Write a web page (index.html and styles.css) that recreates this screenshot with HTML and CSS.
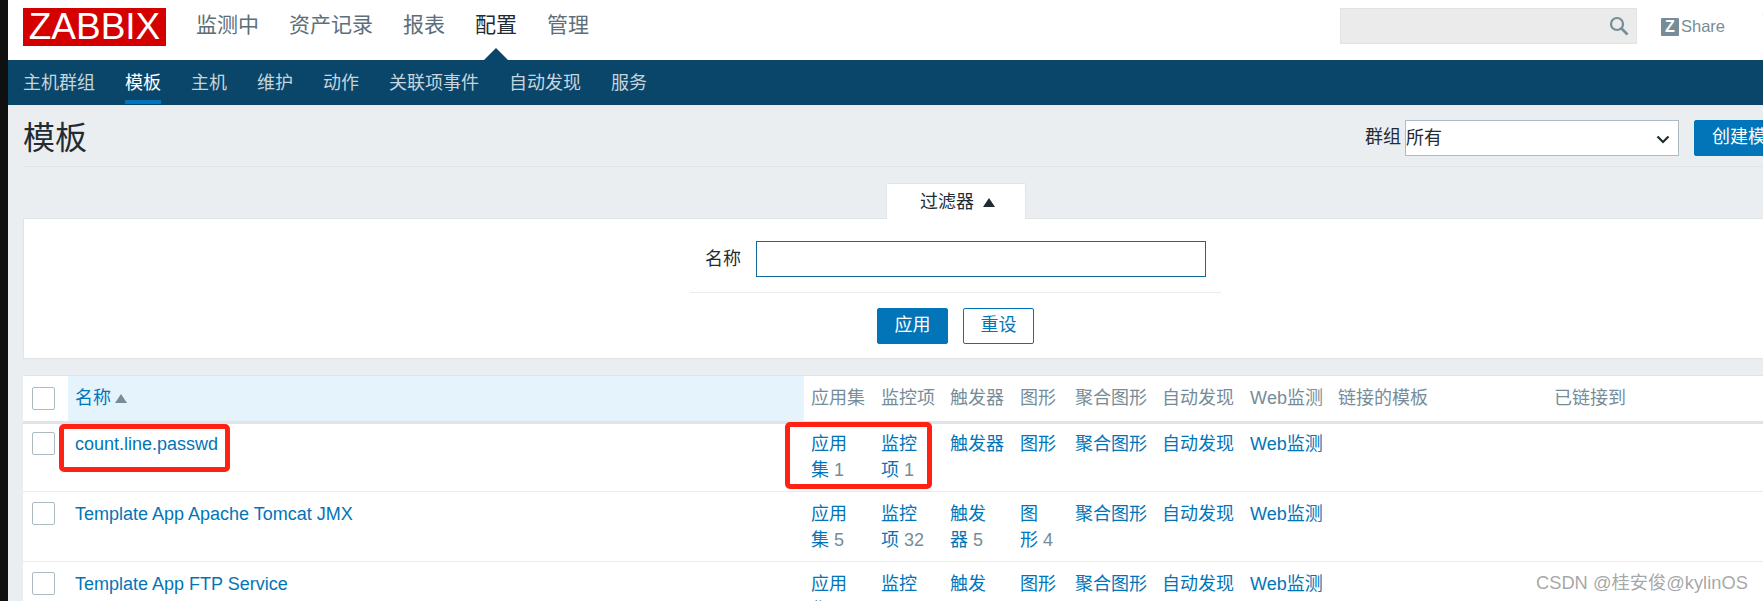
FILE: index.html
```html
<!DOCTYPE html>
<html lang="zh-CN">
<head>
<meta charset="utf-8">
<title>模板</title>
<link rel="stylesheet" href="styles.css">
</head>
<body>
<div class="strip"></div>
<div class="page">
  <header class="top">
    <a class="logo">ZABBIX</a>
    <nav class="mainnav">
      <a>监测中</a><a>资产记录</a><a>报表</a><a class="active">配置<i class="caret"></i></a><a>管理</a>
    </nav>
    <div class="search">
      <svg class="search-icon" width="20" height="20" viewBox="0 0 20 20"><circle cx="8" cy="8" r="6" fill="none" stroke="#768d99" stroke-width="2.2"/><path d="M12.5 12.5L18.5 18.5" stroke="#768d99" stroke-width="2.6"/></svg>
    </div>
    <a class="share"><b class="zicon">Z</b>Share</a>
    <a class="help">?</a>
  </header>
  <nav class="subnav">
    <a>主机群组</a><a class="active">模板</a><a>主机</a><a>维护</a><a>动作</a><a>关联项事件</a><a>自动发现</a><a>服务</a>
  </nav>
  <main class="content">
    <div class="titlebar">
      <h1>模板</h1>
      <div class="controls">
        <label>群组</label>
        <div class="select"><span>所有</span>
          <svg width="14" height="9" viewBox="0 0 14 9"><path d="M1.5 1.5L7 7L12.5 1.5" fill="none" stroke="#1f2c33" stroke-width="2.2"/></svg>
        </div>
        <button class="btn primary wide">创建模板</button>
        <button class="btn primary">导入</button>
      </div>
    </div>
    <div class="filter">
      <div class="tabrow"><div class="tab">过滤器<i class="up"></i></div></div>
      <div class="panel">
        <div class="formrow"><label>名称</label><div class="input"></div></div>
        <div class="actions"><button class="btn primary">应用</button><button class="btn ghost">重设</button></div>
      </div>
    </div>
    <table class="grid">
      <colgroup>
        <col class="c0"><col class="c1"><col class="c2"><col class="c3"><col class="c2"><col class="c4"><col class="c6"><col class="c5"><col class="c5"><col class="c7"><col class="c8">
      </colgroup>
      <thead>
        <tr>
          <th class="chk"><span class="box"></span></th>
          <th class="sorted">名称<i class="sort"></i></th>
          <th>应用集</th><th>监控项</th><th>触发器</th><th>图形</th><th>聚合图形</th><th>自动发现</th><th>Web监测</th><th>链接的模板</th><th>已链接到</th>
        </tr>
      </thead>
      <tbody>
        <tr>
          <td class="chk"><span class="box"></span></td>
          <td><a>count.line.passwd</a></td>
          <td><a>应用集</a>&nbsp;<s>1</s></td><td><a>监控项</a>&nbsp;<s>1</s></td><td><a>触发器</a></td><td><a>图形</a></td><td><a>聚合图形</a></td><td><a>自动发现</a></td><td><a>Web监测</a></td><td></td><td></td>
        </tr>
        <tr>
          <td class="chk"><span class="box"></span></td>
          <td><a>Template App Apache Tomcat JMX</a></td>
          <td><a>应用集</a>&nbsp;<s>5</s></td><td><a>监控项</a>&nbsp;<s>32</s></td><td><a>触发器</a>&nbsp;<s>5</s></td><td><a>图形</a>&nbsp;<s>4</s></td><td><a>聚合图形</a></td><td><a>自动发现</a></td><td><a>Web监测</a></td><td></td><td></td>
        </tr>
        <tr>
          <td class="chk"><span class="box"></span></td>
          <td><a>Template App FTP Service</a></td>
          <td><a>应用集</a>&nbsp;<s>1</s></td><td><a>监控项</a>&nbsp;<s>1</s></td><td><a>触发器</a>&nbsp;<s>1</s></td><td><a>图形</a></td><td><a>聚合图形</a></td><td><a>自动发现</a></td><td><a>Web监测</a></td><td></td><td></td>
        </tr>
      </tbody>
    </table>
  </main>
  <div class="mark mark-name"></div>
  <div class="mark mark-counts"></div>
</div>
<div class="watermark">CSDN @桂安俊@kylinOS</div>
</body>
</html>
```
FILE: styles.css
```css
* { box-sizing: border-box; }
html, body { margin: 0; height: 601px; overflow: hidden; }
body {
  display: flex;
  width: 1903px;
  position: relative;
  font: 18px/25.5px "Liberation Sans", "Noto Sans CJK SC", sans-serif;
  font-kerning: none;
  color: #1f2c33;
  background: #ebeef0;
}
a { color: inherit; text-decoration: none; }
.strip { width: 8px; flex: none; background: #101010; }
.page { flex: 1; min-width: 0; position: relative; }

.top { height: 60px; background: #fff; display: flex; align-items: flex-start; padding: 8px 0 0 15px; }
.logo {
  width: 143px; height: 38px; flex: none;
  background: #d40000; color: #fff; text-align: center;
  font-size: 37px; line-height: 38px;
}
.mainnav { display: flex; gap: 30px; margin-left: 30px; font-size: 21px; line-height: 34px; color: #5d6e78; }
.mainnav a { position: relative; display: block; }
.mainnav .active { color: #1f2c33; }
.caret {
  position: absolute; left: 9px; top: 40px;
  border-left: 12px solid transparent; border-right: 12px solid transparent;
  border-bottom: 12px solid #0a466a;
}
.search {
  width: 297px; height: 36px; margin-left: auto; flex: none;
  background: #ebebeb; border: 1px solid #e3e3e3;
  display: flex; align-items: center; justify-content: flex-end; padding-right: 7px;
}
.share { display: flex; align-items: center; gap: 2px; margin-left: 24px; height: 38px; font-size: 16.5px; color: #768d99; }
.zicon {
  width: 18px; height: 18px; background: #768d99; color: #fff; border-radius: 1px;
  font-size: 16px; line-height: 18px; text-align: center;
}
.help { margin: 0 130px 0 37px; font-size: 18px; line-height: 20px; color: #768d99; font-weight: bold; }

.subnav { height: 45px; background: #0a466a; display: flex; gap: 30px; padding-left: 15px; color: #c5d5de; line-height: 46px; }
.subnav a { height: 44px; }
.subnav .active { color: #fff; border-bottom: 4px solid #0275b8; }

.content { padding: 0 15px; }
.titlebar { height: 62px; display: flex; align-items: center; justify-content: space-between; border-bottom: 1px solid #dfe4e7; padding-top: 5px; }
h1 { margin: 0; font-size: 32px; line-height: 40px; font-weight: normal; color: #1f2c33; }
.controls { display: flex; align-items: center; }
.controls label { margin-right: 4px; }
.select {
  width: 274px; height: 36px; background: #fff; border: 1px solid #acbbc2;
  display: flex; align-items: center; justify-content: space-between; padding: 2px 8px 0 0;
}
.btn { height: 36px; width: 71px; padding: 0; border-radius: 2px; border: 1px solid #0275b8; font: inherit; }
.primary { background: #0275b8; color: #fff; }
.ghost { background: #fff; color: #0275b8; }
.controls .wide { width: 108px; margin: 0 15px; }

.filter { margin-top: 16px; }
.tabrow { display: flex; justify-content: center; }
.tab {
  width: 140px; height: 36px; background: #fff; border-radius: 2px 2px 0 0; margin-bottom: -1px; position: relative;
  border: 1px solid #dfe4e7; border-bottom: 0;
  display: flex; align-items: center; justify-content: center; gap: 9px; padding: 2px 0 0 4px;
}
.up { border-left: 6px solid transparent; border-right: 6px solid transparent; border-bottom: 9px solid #1f2c33; }
.panel { height: 141px; background: #fff; border: 1px solid #dfe4e7; padding-top: 22px; }
.formrow {
  width: 531px; margin: 0 auto; height: 52px; display: flex; align-items: flex-start; gap: 15px;
  border-bottom: 1px solid #ebebeb; padding-left: 15px;
}
.formrow label { line-height: 36px; }
.input { width: 450px; height: 36px; border: 1px solid #0f6a9e; background: #fff; }
.actions { display: flex; justify-content: center; gap: 15px; margin-top: 15px; }

.grid { margin-top: 16px; width: 1865px; table-layout: fixed; border-collapse: collapse; background: #fff; }
.c0 { width: 45px; } .c1 { width: 736px; } .c2 { width: 70px; } .c3 { width: 69px; } .c4 { width: 55px; }
.c5 { width: 88px; } .c6 { width: 87px; } .c7 { width: 216px; }
th, td { text-align: left; font-weight: normal; vertical-align: top; padding: 10px 7px 8px; }
tbody tr:first-child td { padding-top: 8px; }
thead th { height: 47px; color: #768d99; vertical-align: middle; border-bottom: 3px solid #dfe4e7; border-top: 1px solid #dfe4e7; padding: 0 7px; }
thead .sorted { background: #e5f3fd; color: #0275b8; }
tbody tr { border-bottom: 1px solid #ebebeb; height: 68.5px; }
td a { color: #0275b8; font-kerning: normal; }
td s { text-decoration: none; color: #768d99; }
th.chk, td.chk { padding-left: 9px; padding-right: 0; }
.box { display: block; width: 23px; height: 23px; background: #fff; border: 1px solid #acbbc2; border-radius: 2px; }
.sort {
  display: inline-block; margin-left: 4px; vertical-align: 1px;
  border-left: 6px solid transparent; border-right: 6px solid transparent; border-bottom: 9px solid #768d99;
}

.mark { position: absolute; border: 5px solid #ff2114; border-radius: 5px; }
.mark-name { left: 51px; top: 424px; width: 171px; height: 48px; }
.mark-counts { left: 777px; top: 422px; width: 147px; height: 67px; }

.watermark {
  position: absolute; left: 1536px; top: 570px;
  font-size: 18.3px; color: rgba(90, 90, 90, 0.55); white-space: nowrap;
}
```
